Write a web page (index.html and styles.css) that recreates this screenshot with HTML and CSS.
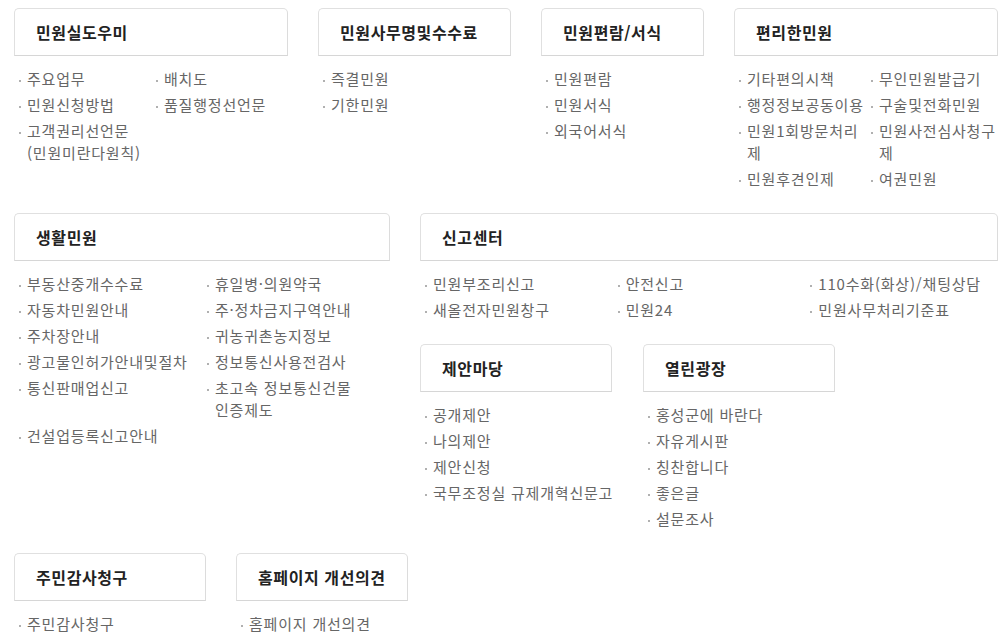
FILE: index.html
```html
<!DOCTYPE html>
<html lang="ko">
<head>
<meta charset="utf-8">
<title>민원안내</title>
<link rel="stylesheet" href="styles.css">
</head>
<body>
<div class="wrap">
  <div class="row">
    <section class="sec w274">
      <h3 class="tit">민원실도우미</h3>
      <ul class="list c2">
        <li>주요업무</li>
        <li>배치도</li>
        <li>민원신청방법</li>
        <li>품질행정선언문</li>
        <li>고객권리선언문<br>(민원미란다원칙)</li>
      </ul>
    </section>
    <section class="sec w193">
      <h3 class="tit">민원사무명및수수료</h3>
      <ul class="list">
        <li>즉결민원</li>
        <li>기한민원</li>
      </ul>
    </section>
    <section class="sec w163">
      <h3 class="tit">민원편람/서식</h3>
      <ul class="list">
        <li>민원편람</li>
        <li>민원서식</li>
        <li>외국어서식</li>
      </ul>
    </section>
    <section class="sec w264">
      <h3 class="tit">편리한민원</h3>
      <ul class="list c2">
        <li>기타편의시책</li>
        <li>무인민원발급기</li>
        <li>행정정보공동이용</li>
        <li>구술및전화민원</li>
        <li>민원1회방문처리제</li>
        <li>민원사전심사청구제</li>
        <li>민원후견인제</li>
        <li>여권민원</li>
      </ul>
    </section>
  </div>

  <div class="row">
    <section class="sec w376">
      <h3 class="tit">생활민원</h3>
      <ul class="list c2">
        <li>부동산중개수수료</li>
        <li>휴일병·의원약국</li>
        <li>자동차민원안내</li>
        <li>주·정차금지구역안내</li>
        <li>주차장안내</li>
        <li>귀농귀촌농지정보</li>
        <li>광고물인허가안내및절차</li>
        <li>정보통신사용전검사</li>
        <li>통신판매업신고</li>
        <li>초고속 정보통신건물<br>인증제도</li>
        <li>건설업등록신고안내</li>
      </ul>
    </section>
    <div class="col w578">
      <section class="sec">
        <h3 class="tit">신고센터</h3>
        <ul class="list c3">
          <li>민원부조리신고</li>
          <li>안전신고</li>
          <li>110수화(화상)/채팅상담</li>
          <li>새올전자민원창구</li>
          <li>민원24</li>
          <li>민원사무처리기준표</li>
        </ul>
      </section>
      <div class="row sub">
        <section class="sec w192">
          <h3 class="tit">제안마당</h3>
          <ul class="list">
            <li>공개제안</li>
            <li>나의제안</li>
            <li>제안신청</li>
            <li class="nw">국무조정실 규제개혁신문고</li>
          </ul>
        </section>
        <section class="sec w192">
          <h3 class="tit">열린광장</h3>
          <ul class="list">
            <li>홍성군에 바란다</li>
            <li>자유게시판</li>
            <li>칭찬합니다</li>
            <li>좋은글</li>
            <li>설문조사</li>
          </ul>
        </section>
      </div>
    </div>
  </div>

  <div class="row">
    <section class="sec w192">
      <h3 class="tit">주민감사청구</h3>
      <ul class="list">
        <li>주민감사청구</li>
      </ul>
    </section>
    <section class="sec w172">
      <h3 class="tit">홈페이지 개선의견</h3>
      <ul class="list">
        <li>홈페이지 개선의견</li>
      </ul>
    </section>
  </div>
</div>
</body>
</html>
```

FILE: styles.css
```css
html, body {
  margin: 0;
  padding: 0;
  background: #fff;
}

body {
  font-family: "Noto Sans CJK KR", "Noto Sans", sans-serif;
  color: #666;
}

.wrap {
  padding: 8px 0 0 14px;
}

.row {
  display: flex;
  align-items: flex-start;
  gap: 30px;
}

.row.sub {
  gap: 31px;
}

.col {
  display: flex;
  flex-direction: column;
}

.sec {
  margin-bottom: 19px;
  flex: none;
}

.w274 { width: 274px; }
.w193 { width: 193px; }
.w163 { width: 163px; }
.w264 { width: 264px; }
.w376 { width: 376px; }
.w578 { width: 578px; }
.w192 { width: 192px; }
.w172 { width: 172px; }

.tit {
  margin: 0;
  height: 46px;
  line-height: 46px;
  padding: 0 0 0 21px;
  border: 1px solid #e0e0e0;
  border-bottom-color: #d6d6d6;
  border-right-color: #dcdcdc;
  border-radius: 5px 5px 0 0;
  font-size: 16px;
  font-weight: 700;
  letter-spacing: 0.6px;
  color: #222;
  white-space: nowrap;
}

.list {
  list-style: none;
  margin: 0;
  padding: 12px 0 0 0;
  display: grid;
  grid-template-columns: 1fr;
}

.list.c2 {
  grid-template-columns: repeat(2, 1fr);
}

.list.c3 {
  grid-template-columns: repeat(3, 1fr);
}

.list li {
  position: relative;
  padding-left: 13px;
  margin-bottom: 4px;
  font-size: 15px;
  line-height: 22px;
  letter-spacing: 0.8px;
  color: #666;
  word-break: keep-all;
  overflow-wrap: anywhere;
}

.list li.nw {
  white-space: nowrap;
}

.list li::before {
  content: "";
  position: absolute;
  left: 5px;
  top: 12px;
  width: 2px;
  height: 2px;
  background: #b0b0b0;
}
```
